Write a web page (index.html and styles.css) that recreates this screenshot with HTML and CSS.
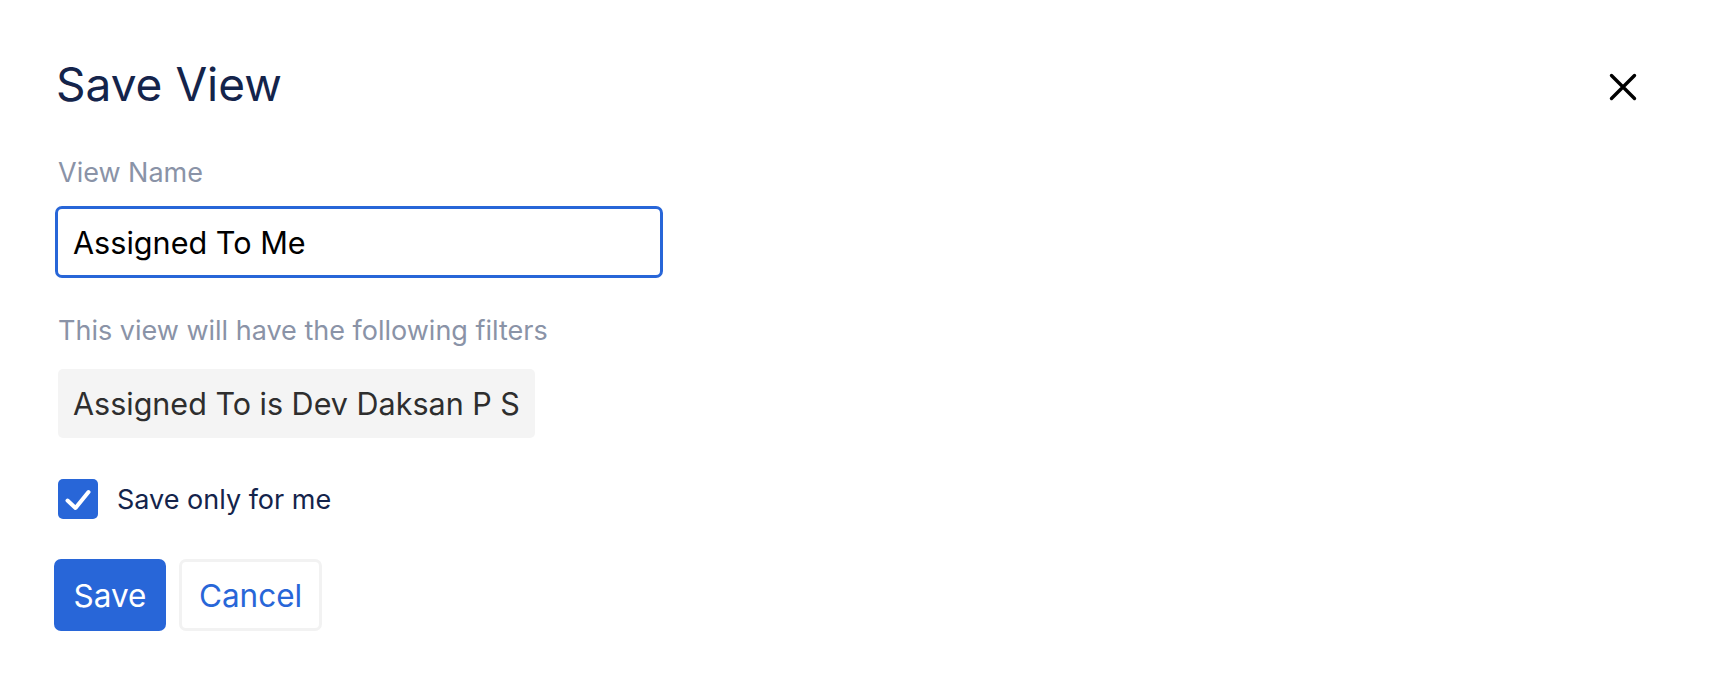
FILE: index.html
```html
<!DOCTYPE html>
<html lang="en">
<head>
<meta charset="utf-8">
<title>Save View</title>
<link rel="stylesheet" href="styles.css">
</head>
<body>
<div class="dialog">
  <div class="header">
    <h1 class="title">Save View</h1>
    <button class="close" aria-label="Close">
      <svg width="28" height="28" viewBox="0 0 28 28"><path d="M2.5 2.5 L25.5 25.5 M25.5 2.5 L2.5 25.5" stroke="#000" stroke-width="3.4" stroke-linecap="round" fill="none"/></svg>
    </button>
  </div>
  <label class="label" for="vn">View Name</label>
  <input id="vn" class="input" type="text" value="Assigned To Me">
  <div class="label filters-label">This view will have the following filters</div>
  <div class="filter-box">Assigned To is Dev Daksan P S</div>
  <div class="check-row">
    <span class="checkbox">
      <svg width="40" height="40" viewBox="0 0 40 40"><path d="M9.5 21.5 L17.5 29 L30.5 13" stroke="#fff" stroke-width="4" stroke-linecap="round" stroke-linejoin="round" fill="none"/></svg>
    </span>
    <span class="check-label">Save only for me</span>
  </div>
  <div class="actions">
    <button class="btn btn-primary">Save</button>
    <button class="btn btn-secondary">Cancel</button>
  </div>
</div>
</body>
</html>
```

FILE: styles.css
```css
html, body {
  margin: 0;
  padding: 0;
  background: #ffffff;
}
body {
  font-family: Inter, "Noto Sans", sans-serif;
}
.dialog {
  padding: 56px 79px 0 58px;
  display: flex;
  flex-direction: column;
  align-items: flex-start;
}
.header {
  align-self: stretch;
  display: flex;
  justify-content: space-between;
  align-items: center;
}
.title {
  margin: 0 0 0 -2px;
  font-size: 46px;
  line-height: 56px;
  font-weight: 400;
  color: #14244b;
}
.close {
  border: 0;
  background: none;
  padding: 0;
  width: 28px;
  height: 28px;
  display: flex;
  margin-top: 6px;
}
.label {
  display: block;
  margin-top: 45px;
  font-size: 27px;
  line-height: 32px;
  color: #8a93a7;
}
.input {
  margin: 17px 0 0 -3px;
  box-sizing: border-box;
  width: 608px;
  height: 72px;
  border: 3px solid #2866d8;
  border-radius: 7px;
  padding: 0 15px;
  font-family: Inter, "Noto Sans", sans-serif;
  font-size: 30.6px;
  color: #000;
  outline: none;
  background: #fff;
}
.filters-label {
  margin-top: 37px;
}
.filter-box {
  margin-top: 22px;
  background: #f4f4f4;
  border-radius: 5px;
  padding: 0 15px;
  height: 69px;
  display: flex;
  align-items: center;
  font-size: 30.5px;
  color: #2e2e2e;
}
.check-row {
  margin-top: 41px;
  display: flex;
  align-items: center;
  gap: 19px;
}
.checkbox {
  width: 40px;
  height: 40px;
  border-radius: 5px;
  background: #2866d8;
  display: flex;
}
.check-label {
  font-size: 27px;
  color: #14244b;
}
.actions {
  margin: 40px 0 0 -4px;
  display: flex;
  gap: 13px;
}
.btn {
  box-sizing: border-box;
  height: 72px;
  border-radius: 7px;
  font-family: Inter, "Noto Sans", sans-serif;
  font-size: 31.5px;
  cursor: pointer;
}
.btn-primary {
  background: #2866d8;
  color: #fff;
  border: 0;
  padding: 0 19.5px;
}
.btn-secondary {
  background: #fff;
  color: #2866d8;
  border: 3px solid #f2f2f2;
  padding: 0 17px;
}
```
